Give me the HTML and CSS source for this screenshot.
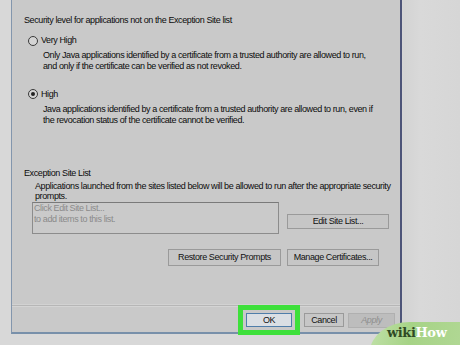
FILE: index.html
```html
<!DOCTYPE html>
<html>
<head>
<meta charset="utf-8">
<link rel="stylesheet" href="styles.css">
</head>
<body>
<div class="stage">
  <div class="dialog">
    <div class="main">
      <div class="heading">Security level for applications not on the Exception Site list</div>
      <div class="option"><span class="radio"></span><span>Very High</span></div>
      <div class="desc">Only Java applications identified by a certificate from a trusted authority are allowed to run,<br>and only if the certificate can be verified as not revoked.</div>
      <div class="option option-high"><span class="radio checked"></span><span>High</span></div>
      <div class="desc desc-high">Java applications identified by a certificate from a trusted authority are allowed to run, even if<br>the revocation status of the certificate cannot be verified.</div>
      <div class="exc-title">Exception Site List</div>
      <div class="exc-desc">Applications launched from the sites listed below will be allowed to run after the appropriate security<br>prompts.</div>
      <div class="exc-row">
        <div class="site-box">Click Edit Site List...<br>to add items to this list.</div>
        <div class="btn btn-edit">Edit Site List...</div>
      </div>
      <div class="cert-row">
        <div class="btn btn-restore">Restore Security Prompts</div>
        <div class="btn btn-manage">Manage Certificates...</div>
      </div>
    </div>
    <div class="footer">
      <div class="btn btn-ok">OK</div>
      <div class="btn btn-cancel">Cancel</div>
      <div class="btn btn-apply">Apply</div>
    </div>
  </div>
  <div class="watermark"><span class="wiki">wiki</span><span class="how">How</span></div>
</div>
</body>
</html>
```
FILE: styles.css
```css
* { box-sizing: border-box; }
html, body { margin: 0; padding: 0; }
body {
  width: 460px;
  height: 345px;
  overflow: hidden;
  background: #d6d6d6;
  font-family: "Liberation Sans", Arial, sans-serif;
  font-size: 9px;
  letter-spacing: -0.4px;
  line-height: 10.7px;
  color: #0c0c0c;
  white-space: nowrap;
}
.stage {
  position: relative;
  width: 460px;
  height: 345px;
  background: linear-gradient(90deg, #d8d8d8 0, #d8d8d8 400px, #d3d3d3 404px, #d9d9d9 420px, #d6d6d6 460px);
}
.dialog {
  margin-left: 11px;
  width: 391px;
  height: 334px;
  background: #c9c9c9;
  border-left: 1px solid #8396ad;
  border-right: 2px solid #4d5478;
  border-bottom: 2px solid #7890aa;
  display: flex;
  flex-direction: column;
}
.main {
  padding: 15px 0 0 12px;
  flex: 1;
}
.heading { height: 11px; }
.option {
  display: flex;
  align-items: center;
  gap: 3px;
  margin: 9px 0 0 4px;
  height: 11px;
}
.radio {
  width: 10px;
  height: 10px;
  border-radius: 50%;
  border: 1px solid #3a3a3a;
  background: #d4d4d4;
  display: flex;
  align-items: center;
  justify-content: center;
}
.radio.checked::after {
  content: "";
  width: 4px;
  height: 4px;
  border-radius: 50%;
  background: #222;
}
.desc { margin: 4px 0 0 19px; }
.option-high { margin-top: 17px; }
.desc-high { margin-top: 5px; }
.exc-title { margin-top: 42px; }
.exc-desc { margin: 2px 0 0 11px; }
.exc-row {
  display: flex;
  align-items: flex-start;
  margin-left: 8px;
}
.site-box {
  width: 247px;
  height: 32px;
  border: 1px solid #8c8c8c;
  border-top-color: #7a7a7a;
  color: #8a8a8a;
  padding: 0 0 0 1px;
  background: #cacaca;
}
.btn {
  border: 1px solid #9a9a9a;
  background: #c6c6c6;
  display: flex;
  align-items: center;
  justify-content: center;
  color: #111;
}
.btn-edit {
  margin: 12px 0 0 8px;
  width: 102px;
  height: 15px;
}
.cert-row {
  display: flex;
  gap: 6px;
  margin: 15px 0 0 144px;
}
.btn-restore { width: 113px; height: 17px; }
.btn-manage { width: 92px; height: 17px; }
.footer {
  height: 27px;
  border-top: 1px solid #b6b6b6;
  box-shadow: inset 0 1px 0 #d4d4d4, 0 -1px 0 #d2d2d2;
  display: flex;
  align-items: flex-start;
  padding: 7px 0 0 234px;
}
.btn-ok {
  width: 46px;
  height: 14px;
  background: #dadfe4;
  border-color: #4f7eaa;
  outline: 5px solid #3ee03b;
  outline-offset: 3px;
}
.btn-cancel { width: 40px; height: 14px; margin-left: 12px; }
.btn-apply {
  width: 47px;
  height: 15px;
  margin-left: 4px;
  background: #bdbdbd;
  border-color: #b0b0b0;
  color: #8e8e8e;
  font-style: italic;
}
.watermark {
  position: absolute;
  left: 370px;
  top: 322px;
  width: 100px;
  height: 30px;
  border-top-left-radius: 40px 30px;
  background: linear-gradient(100deg, #c0e0a8 0%, #a6d386 40%, #b2d896 100%);
  font-family: "DejaVu Serif", "Liberation Serif", serif;
  font-weight: bold;
  font-size: 13px;
  line-height: 16px;
  padding: 3px 0 0 17px;
  letter-spacing: -0.4px;
}
.wiki { color: #2f4a24; }
.how { color: #ffffff; }
```
